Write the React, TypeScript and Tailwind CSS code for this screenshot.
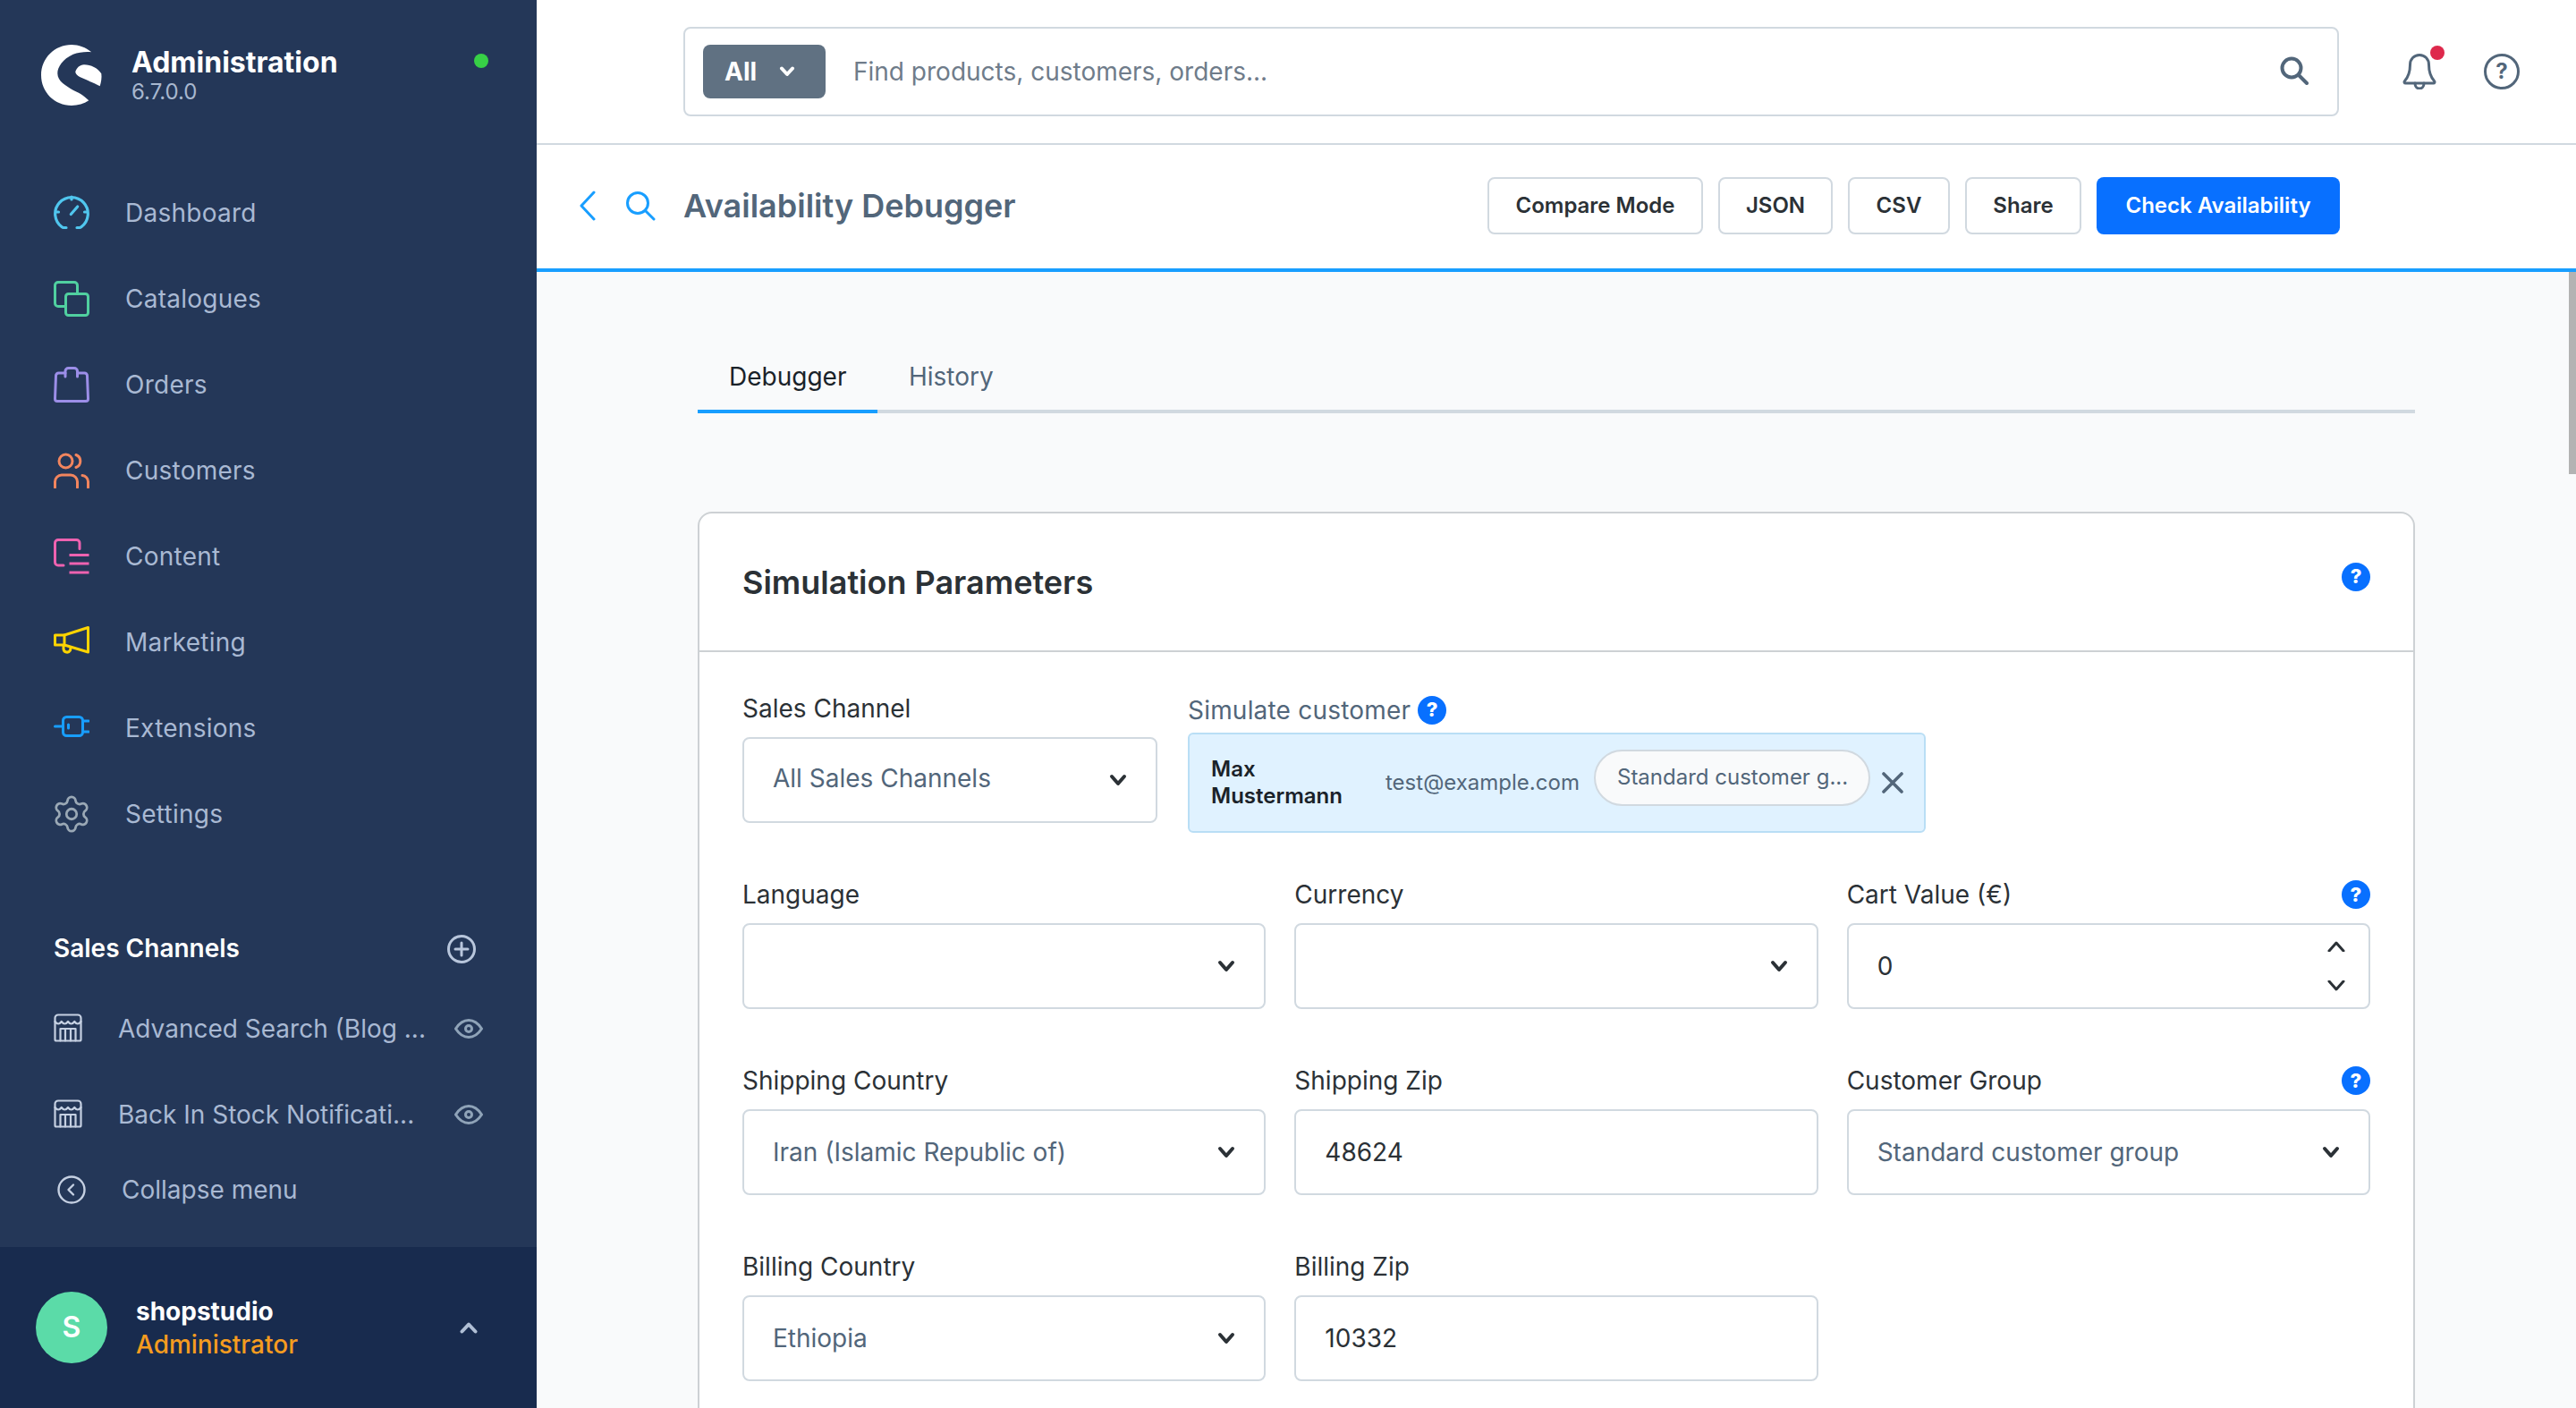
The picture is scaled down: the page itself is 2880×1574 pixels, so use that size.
import React from "react";
import { Settings } from "lucide-react";

const S = (p: React.SVGProps<SVGSVGElement> & { w: number; h: number; vb?: string }) => {
  const { w, h, vb, children, ...rest } = p;
  return (
    <svg width={w} height={h} viewBox={vb ?? `0 0 ${w} ${h}`} fill="none" stroke="currentColor" strokeLinecap="round" strokeLinejoin="round" {...rest} className={`shrink-0 ${rest.className ?? ""}`}>
      {children}
    </svg>
  );
};

const Logo = () => (
  <svg width="68" height="68" viewBox="0 0 68 68" className="shrink-0">
    <path fill="#fff" d="M56.300 8.300C50 3 42 0 34 0 15 0 0 15 0 34s15 34 34 34c7 0 14-2 19.300-5.700C47 56 41 53 35.700 50.700 28 46 18.300 41 18.300 32c0-7 5.700-16 17.400-21.300 6.300-2.200 14.300-3.200 20.600-2.400Z" />
    <path fill="#fff" d="M38.300 30c1.700-4 4.700-7.700 9.700-7.700 8 0 15 3.700 19.300 10 .7 4.700-.3 9.700-1.600 14-5.700-3.300-10.700-4.800-13.400-6.300C47 37.500 38 35 38.300 30Z" />
  </svg>
);

const icons: Record<string, React.ReactNode> = {
  Dashboard: (
    <S w={40} h={40} strokeWidth={3.2} className="text-[#50c6ee]">
      <path d="M14 36.500h-3c-.7 0-1.300-.3-1.800-.8A18.300 18.300 0 1 1 30.800 35.700c-.5.5-1.100.8-1.800.8h-3" />
      <path d="M20 2v3M2.500 19h3M34.500 19h3M19.300 21.500l7.400-8.500" />
    </S>
  ),
  Catalogues: (
    <S w={40} h={40} strokeWidth={3} className="text-[#50d0a0]">
      <path d="M12.500 28.500H5a3.500 3.500 0 0 1-3.500-3.500V5A3.500 3.500 0 0 1 5 1.500h18A3.500 3.500 0 0 1 26.500 5v8.500" />
      <rect x="13.500" y="14.500" width="25" height="24" rx="3" />
    </S>
  ),
  Orders: (
    <S w={40} h={40} strokeWidth={3} className="text-[#9c8ee8]">
      <path d="M13 7H5.500a3 3 0 0 0-3 3L1.500 36a2.500 2.500 0 0 0 2.500 2.500h32a2.500 2.500 0 0 0 2.500-2.500L37.500 10a3 3 0 0 0-3-3H26.500" />
      <path d="M13 11V5a3.500 3.500 0 0 1 3.500-3.500h6.500A3.500 3.500 0 0 1 26.500 5v6" />
    </S>
  ),
  Customers: (
    <S w={40} h={40} strokeWidth={3} className="text-[#f2855e]">
      <circle cx="13.500" cy="9.500" r="7.500" />
      <path d="M25 2.500a7.500 7.500 0 0 1 0 14M1.500 39v-6.500a7.500 7.500 0 0 1 7.500-7.500h10a7.500 7.500 0 0 1 7.500 7.500V39M32 25.500a7 7 0 0 1 6.500 7V39" />
    </S>
  ),
  Content: (
    <S w={40} h={40} strokeWidth={3} className="text-[#ee62b0]">
      <path d="M29 11.500V5a3.500 3.500 0 0 0-3.500-3.500H5A3.500 3.500 0 0 0 1.500 5v21.500A3.500 3.500 0 0 0 5 30h6" />
      <path d="M17.500 18.500h22M17.500 28h22M17.500 38h22" strokeLinecap="butt" />
    </S>
  ),
  Marketing: (
    <S w={40} h={40} strokeWidth={3} className="text-[#ffd400]">
      <path d="M12 12L38.500 3.500V31L12 23Z" />
      <path d="M12 12H1.500v11H12" />
      <path d="M11 24v3.500a4 4 0 0 0 7.500 1.500l.6-3" />
    </S>
  ),
  Extensions: (
    <S w={40} h={40} strokeWidth={3} className="text-[#189eff]">
      <rect x="10.500" y="7.500" width="22" height="21" rx="4" />
      <path d="M1.500 18H10M33 12h6M33 24h6M16.500 16v4" />
    </S>
  ),
};

const nav = ["Dashboard", "Catalogues", "Orders", "Customers", "Content", "Marketing", "Extensions", "Settings"];

const Store = () => (
  <S w={32} h={32} strokeWidth={2.2} className="text-[#c5d0e2] -mt-[3px]">
    <path d="M1.500 5A3.500 3.500 0 0 1 5 1.500h22A3.500 3.500 0 0 1 30.500 5v24a1.500 1.500 0 0 1-1.500 1.500H3A1.500 1.500 0 0 1 1.500 29Z" />
    <path d="M1.500 9q3.600 5 7.250 0q3.600 5 7.250 0q3.600 5 7.250 0q3.600 5 7.250 0" />
    <path d="M7.500 30.500V17h17v13.500M13 17v13.500M19 17v13.500" />
  </S>
);

const Eye = () => (
  <S w={32} h={22} strokeWidth={3} className="text-[#8fa3b8]">
    <path d="M1.500 11C6 4 11 1.500 16 1.500S26 4 30.500 11C26 18 21 20.500 16 20.500S6 18 1.500 11Z" />
    <circle cx="16" cy="11" r="3.500" />
  </S>
);

const Chev = ({ cls = "text-[#2b3136]" }: { cls?: string }) => (
  <S w={20} h={14} strokeWidth={4} className={cls}>
    <path d="M3 3l7 8 7-8" />
  </S>
);

const Help = () => (
  <span className="w-[32px] h-[32px] rounded-full bg-[#0870ff] text-white text-[22px] font-extrabold flex items-center justify-center shrink-0">?</span>
);

const Label = ({ children, help }: { children: React.ReactNode; help?: boolean }) => (
  <div className="h-[40px] mb-[12px] flex items-center justify-between text-[28px] text-[#2b3136]">
    <span>{children}</span>
    {help && <Help />}
  </div>
);

const Box = ({ children }: { children?: React.ReactNode }) => (
  <div className="h-[96px] bg-white border-2 border-[#d1d9e0] rounded-[8px] flex items-center justify-between pl-[32px] pr-[32px] text-[28px]">
    {children}
  </div>
);

const SelectField = ({ label, value, help, up }: { label: string; value?: string; help?: boolean; up?: boolean }) => (
  <div>
    <Label help={help}>{label}</Label>
    <Box>
      <span className={`text-[#52667a] ${up ? "-mt-[4px]" : ""}`}>{value}</span>
      <Chev />
    </Box>
  </div>
);

const InputField = ({ label, value }: { label: string; value: string }) => (
  <div>
    <Label>{label}</Label>
    <Box>
      <span className="text-[#2b3136]">{value}</span>
    </Box>
  </div>
);

const Btn = ({ children, primary, w }: { children: React.ReactNode; primary?: boolean; w: string }) => (
  <button className={`${w} h-[64px] rounded-[8px] text-[24px] font-semibold flex items-center justify-center ${primary ? "bg-[#0870ff] text-white" : "bg-white text-[#2b3136] border-2 border-[#d1d9e0]"}`}>
    {children}
  </button>
);

export default function App() {
  return (
    <div className="w-[2880px] h-[1574px] flex overflow-hidden font-['Inter',sans-serif] bg-white">
      <aside className="w-[600px] h-full flex flex-col bg-[#243758] shrink-0">
        <div className="h-[190px] pt-[50px] pl-[46px] pr-[54px] flex items-start">
          <Logo />
          <div className="ml-[33px] flex-1">
            <div className="text-[32px] leading-[40px] font-bold text-white">Administration</div>
            <div className="text-[24px] leading-[26px] text-[#a8b7cf]">6.7.0.0</div>
          </div>
          <span className="w-[16px] h-[16px] rounded-full bg-[#37d046] mt-[10px]" />
        </div>
        <nav>
          {nav.map((n) => (
            <div key={n} className="h-[96px] pl-[60px] flex items-center gap-[40px] text-[28px] tracking-[0.25px] text-[#a9b9d3]">
              {n === "Settings" ? <span className="w-[40px] h-[40px] flex items-center justify-center shrink-0"><Settings size={46} strokeWidth={1.45} className="text-[#9aa8b5] shrink-0" /></span> : icons[n]}
              <span>{n}</span>
            </div>
          ))}
        </nav>
        <div className="mt-[72px] h-[60px] pl-[60px] pr-[68px] flex items-center justify-between">
          <span className="text-[28px] font-semibold text-white">Sales Channels</span>
          <S w={32} h={32} strokeWidth={3} className="text-[#b8c6dc] mt-[2px]">
            <circle cx="16" cy="16" r="14.500" />
            <path d="M16 9v14M9 16h14" />
          </S>
        </div>
        <div className="mt-[12px]">
          {["Advanced Search (Blog ...", "Back In Stock Notificati..."].map((t) => (
            <div key={t} className="h-[96px] pl-[60px] pr-[60px] flex items-center text-[28px] text-[#a9b9d3]">
              <Store />
              <span className="ml-[40px] flex-1 whitespace-nowrap">{t}</span>
              <Eye />
            </div>
          ))}
        </div>
        <div className="mt-[6px] h-[60px] pl-[64px] flex items-center text-[28px] text-[#a9b9d3]">
          <S w={32} h={32} strokeWidth={2.4} className="text-[#c5d0e2]">
            <circle cx="16" cy="16" r="14.500" />
            <path d="M18 10.500L12.500 16l5.500 5.500" />
          </S>
          <span className="ml-[40px]">Collapse menu</span>
        </div>
        <div className="mt-auto h-[180px] bg-[#182b4e] pl-[40px] pr-[66px] flex items-center">
          <div className="w-[80px] h-[80px] rounded-full bg-[#5bdba8] text-white text-[32px] font-semibold flex items-center justify-center">S</div>
          <div className="ml-[32px] flex-1 pt-[2px]">
            <div className="text-[28px] leading-[36px] font-bold text-white">shopstudio</div>
            <div className="text-[28px] leading-[38px] font-medium text-[#f59c1f]">Administrator</div>
          </div>
          <S w={20} h={14} strokeWidth={4} className="text-[#b0bfd5]">
            <path d="M2.500 11.500L10 3.500l7.500 8" />
          </S>
        </div>
      </aside>

      <main className="flex-1 h-full flex flex-col min-w-0">
        <header className="h-[162px] shrink-0 border-b-2 border-[#d1d9e0] pl-[164px] pt-[30px] flex items-start">
          <div className="w-[1851px] h-[100px] border-2 border-[#d1d9e0] rounded-[8px] flex items-center pl-[20px] pr-[32px]">
            <div className="w-[137px] h-[60px] rounded-[8px] bg-[#607182] text-white text-[28px] font-bold flex items-center pl-[24px] gap-[25px]">
              <span>All</span>
              <S w={18} h={12} strokeWidth={4} className="text-white"><path d="M3 2.500l6 6.500 6-6.500" /></S>
            </div>
            <span className="ml-[31px] flex-1 text-[28px] text-[#6f7c8a]">Find products, customers, orders...</span>
            <S w={32} h={32} strokeWidth={4} className="text-[#52667a] -mt-[2px]">
              <circle cx="13" cy="13" r="10.500" />
              <path d="M21 21l9 9" />
            </S>
          </div>
          <div className="relative ml-[70px] mt-[30px] w-[40px] h-[40px]">
            <S w={40} h={40} strokeWidth={3} className="text-[#52667a]">
              <path d="M20 1.500c-6 0-10.500 4.500-10.500 11 0 9-2.500 14-6 18-1 1-.5 2.500 1 2.500h31c1.500 0 2-1.500 1-2.500-3.500-4-6-9-6-18 0-6.500-4.500-11-10.500-11Z" />
              <path d="M15 33c0 3.500 2 6 5 6s5-2.500 5-6" />
            </S>
            <span className="absolute left-[32px] top-[-9px] w-[16px] h-[16px] rounded-full bg-[#de294c]" />
          </div>
          <div className="ml-[52px] mt-[30px] w-[40px] h-[40px] rounded-full border-[3px] border-[#52667a] text-[#52667a] text-[24px] font-bold flex items-center justify-center">?</div>
        </header>

        <div className="h-[142px] shrink-0 border-b-4 border-[#189eff] pl-[48px] pb-[2px] flex items-center">
          <S w={18} h={34} strokeWidth={3} className="text-[#189eff]">
            <path d="M16 2L2 17l14 15" />
          </S>
          <S w={34} h={34} strokeWidth={3} className="text-[#189eff] ml-[33px]">
            <circle cx="14" cy="14" r="11.500" />
            <path d="M23 23l9 9" />
          </S>
          <h1 className="ml-[31px] text-[36px] font-semibold text-[#52667a] whitespace-nowrap">Availability Debugger</h1>
          <div className="ml-auto mr-[264px] flex gap-[17px]">
            <Btn w="w-[241px]">Compare Mode</Btn>
            <Btn w="w-[128px]">JSON</Btn>
            <Btn w="w-[114px]">CSV</Btn>
            <Btn w="w-[130px]">Share</Btn>
            <Btn w="w-[272px]" primary>Check Availability</Btn>
          </div>
        </div>

        <div className="relative flex-1 overflow-hidden bg-[#f9fafb] px-[180px]">
          <span className="absolute right-0 top-0 w-[8px] h-[226px] bg-[#b3b3b3]" />
          <div className="mt-[80px] h-[78px] border-b-4 border-[#d1d9e0] flex text-[28px]">
            <div className="w-[201px] h-[78px] pl-[35px] flex items-center border-b-4 border-[#189eff] text-[#1a2229]">Debugger</div>
            <div className="pl-[35px] flex items-center text-[#52667a]">History</div>
          </div>
          <section className="mt-[110px] h-[1400px] bg-white border-2 border-[#cdd1d4] rounded-[16px]">
            <div className="h-[155px] border-b-2 border-[#cdd1d4] pl-[48px] pr-[48px] flex items-center justify-between">
              <h2 className="text-[36px] font-semibold text-[#2b3136]">Simulation Parameters</h2>
              <span className="-mt-[12px]"><Help /></span>
            </div>
            <div className="pt-[43px] pl-[48px] pr-[48px]">
              <div className="flex gap-[34px]">
                <div className="w-[464px]">
                  <SelectField label="Sales Channel" value="All Sales Channels" up />
                </div>
                <div className="w-[825px]">
                  <div className="h-[40px] mb-[7px] pt-[3px] flex items-center gap-[8px] text-[28px] text-[#52667a]">
                    <span className="tracking-[0.2px]">Simulate customer</span>
                    <Help />
                  </div>
                  <div className="h-[112px] bg-[#e0f2ff] border-2 border-[#b9def5] rounded-[6px] pl-[24px] flex items-center">
                    <div className="w-[195px] text-[24px] leading-[30px] font-semibold text-[#1a2229]">Max<br />Mustermann</div>
                    <span className="w-[233px] text-[24px] text-[#52667a]">test@example.com</span>
                    <div className="w-[309px] h-[63px] -mt-[12px] rounded-full border-2 border-[#d1d9e0] bg-[#f9fafb] pl-[24px] flex items-center text-[24px] text-[#52667a]">Standard customer g...</div>
                    <S w={24} h={24} strokeWidth={3.6} className="text-[#52667a] ml-[13px]">
                      <path d="M2 2l20 20M22 2L2 22" />
                    </S>
                  </div>
                </div>
              </div>
              <div className="mt-[49px] grid grid-cols-3 gap-x-[32px] gap-y-[60px]">
                <SelectField label="Language" />
                <SelectField label="Currency" />
                <div>
                  <Label help>Cart Value (€)</Label>
                  <Box>
                    <span className="text-[#2b3136]">0</span>
                    <div className="flex flex-col gap-[32px] mr-[-6px]">
                      <S w={20} h={12} strokeWidth={3} className="text-[#2b3136]"><path d="M2 11l8-9 8 9" /></S>
                      <S w={20} h={12} strokeWidth={3} className="text-[#2b3136]"><path d="M2 1l8 9 8-9" /></S>
                    </div>
                  </Box>
                </div>
                <SelectField label="Shipping Country" value="Iran (Islamic Republic of)" />
                <InputField label="Shipping Zip" value="48624" />
                <SelectField label="Customer Group" value="Standard customer group" help />
                <SelectField label="Billing Country" value="Ethiopia" />
                <InputField label="Billing Zip" value="10332" />
              </div>
            </div>
          </section>
        </div>
      </main>
    </div>
  );
}
